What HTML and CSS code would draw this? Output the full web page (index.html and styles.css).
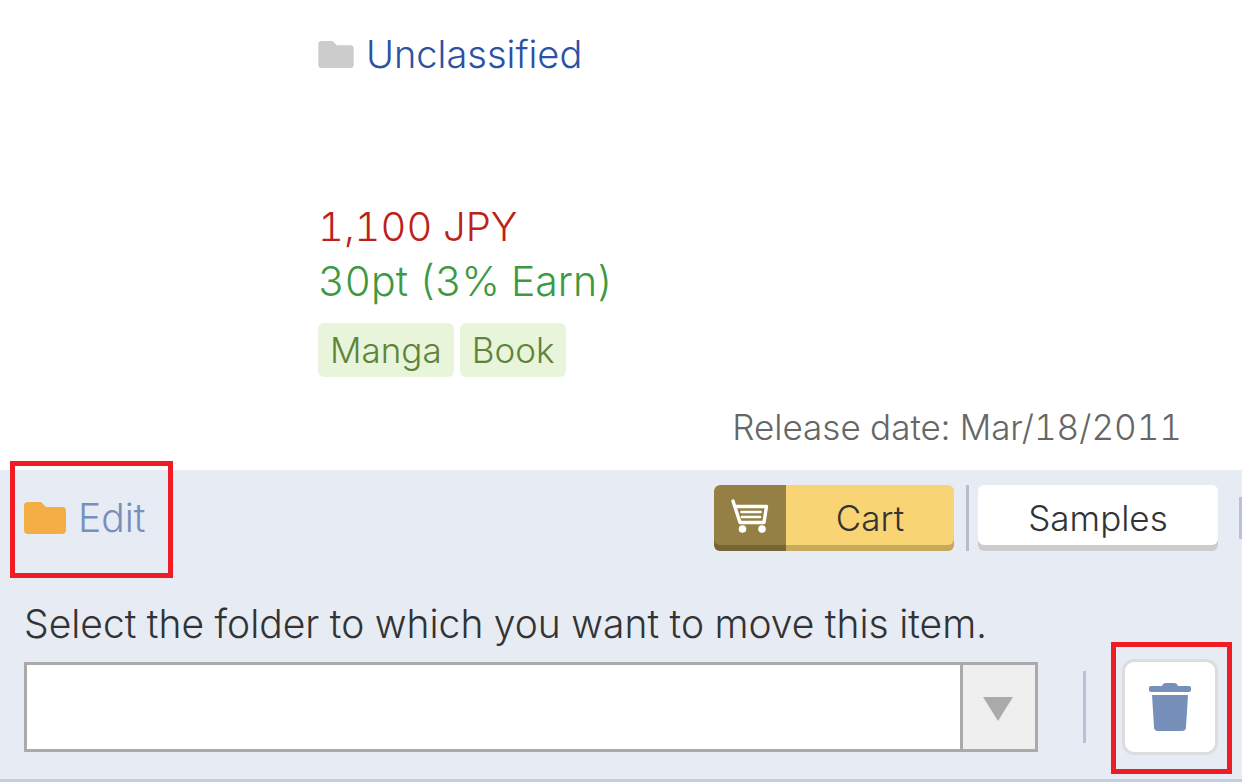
FILE: index.html
```html
<!DOCTYPE html>
<html lang="en">
<head>
<meta charset="utf-8">
<meta name="viewport" content="width=device-width, initial-scale=1">
<title>Wish list item</title>
<link rel="stylesheet" href="styles.css">
</head>
<body>
<main class="page">
  <section class="item">
    <a class="folder-link" href="#">
      <svg class="folder-icon" viewBox="0 0 42 32" aria-hidden="true"><path d="M4 0h13l5 5h16a4 4 0 0 1 4 4v19a4 4 0 0 1-4 4H4a4 4 0 0 1-4-4V4a4 4 0 0 1 4-4z"/></svg>
      <span>Unclassified</span>
    </a>
    <p class="price">1,100 JPY</p>
    <p class="points">30pt (3% Earn)</p>
    <div class="tags"><span class="tag">Manga</span><span class="tag">Book</span></div>
    <p class="release">Release date: Mar/18/2011</p>
  </section>

  <section class="panel">
    <div class="actions">
      <button class="edit" type="button">
        <svg class="edit-icon" viewBox="0 0 42 32" aria-hidden="true"><path d="M4 0h13l5 5h16a4 4 0 0 1 4 4v19a4 4 0 0 1-4 4H4a4 4 0 0 1-4-4V4a4 4 0 0 1 4-4z"/></svg>
        <span>Edit</span>
      </button>
      <button class="button cart" type="button">
        <span class="cart-side">
          <svg class="cart-icon" viewBox="0 0 38 34" aria-hidden="true">
            <path d="M2 2l7 21.500h24l2.500-16H4" fill="none" stroke="#fff" stroke-width="3.400" stroke-linecap="round" stroke-linejoin="round"/>
            <path d="M10.500 13h19M11 18h18" stroke="#fff" stroke-width="2.600" stroke-linecap="round"/>
            <circle cx="11.500" cy="30" r="3.800" fill="#fff"/><circle cx="31" cy="30" r="3.800" fill="#fff"/>
          </svg>
        </span>
        <span class="cart-label">Cart</span>
      </button>
      <span class="divider"></span>
      <button class="button samples" type="button">Samples</button>
      <span class="edge-divider"></span>
    </div>
    <label class="move-label" for="folder">Select the folder to which you want to move this item.</label>
    <div class="move-row">
      <div class="picker">
        <select id="folder" class="picker-select"><option></option></select>
        <span class="picker-arrow"><svg class="arrow-icon" viewBox="0 0 30 24" aria-hidden="true"><path d="M0 0h30L15 24z"/></svg></span>
      </div>
      <span class="row-divider"></span>
      <button class="trash" type="button" aria-label="Delete">
        <svg class="trash-icon" viewBox="0 0 42 48" aria-hidden="true"><path d="M2 3h11q1-3 4-3h8q3 0 4 3h11q2 0 2 2v2q0 2-2 2H2q-2 0-2-2V5q0-2 2-2zM3 12h36l-2 32q0 4-4 4H9q-4 0-4-4z"/></svg>
      </button>
    </div>
  </section>
</main>
</body>
</html>
```
FILE: styles.css
```css
* { box-sizing: border-box; }
body {
  margin: 0;
  background: #fff;
  color: #333;
  font-family: Inter, "Liberation Sans", sans-serif;
  font-size: 36px;
  font-weight: 300;
  font-variant-numeric: tabular-nums;
}
p { margin: 0; }
button { font: inherit; color: inherit; border: 0; padding: 0; background: none; cursor: pointer; }
svg { display: block; }

.item { padding: 27px 60px 16px 318px; }
.folder-link {
  display: inline-flex;
  align-items: center;
  gap: 12px;
  line-height: 54px;
  font-size: 38px;
  color: #2b52a3;
  text-decoration: none;
}
.folder-icon { width: 36px; height: 27px; fill: #ccc; }
.price, .points { line-height: 54px; }
.price { margin-top: 119px; font-size: 40px; color: #bd2219; }
.points { font-size: 41px; color: #3e9a42; }
.tags { display: flex; gap: 6px; margin-top: 15px; }
.tag {
  padding: 0 12px;
  border-radius: 6px;
  background: #e8f5da;
  color: #5f8439;
  font-size: 35px;
  line-height: 54px;
}
.release { margin-top: 24px; font-size: 35px; line-height: 53px; color: #666; text-align: right; }

.panel { padding: 15px 0 24px 24px; background: #e6ebf4; border-bottom: 3px solid #c4ccdf; }
.actions { display: flex; align-items: center; }
.edit {
  position: relative;
  display: flex;
  align-items: center;
  gap: 12px;
  margin-right: auto;
  line-height: 66px;
  font-size: 39px;
  color: #7790ba;
}
.edit::after, .trash::after {
  content: "";
  position: absolute;
  border: 5px solid #ee1c25;
  pointer-events: none;
}
.edit::after { inset: -24px -28px -27px -14px; }
.edit-icon { width: 42px; height: 32px; fill: #f4ae46; }
.button {
  width: 240px;
  height: 66px;
  border-radius: 6px;
  overflow: hidden;
  font-size: 35px;
}
.cart { display: flex; background: #f8d474; box-shadow: inset 0 -6px #c5a95c; }
.cart-side {
  display: grid;
  place-items: center;
  width: 72px;
  height: 66px;
  padding-bottom: 4px;
  border-radius: 6px 0 0 6px;
  background: #948045;
  box-shadow: inset 0 -6px #766637;
}
.cart-icon { width: 38px; height: 34px; }
.cart-label { flex: 1; line-height: 66px; }
.samples { background: #fff; box-shadow: inset 0 -6px #ccc; line-height: 66px; }
.divider { width: 3px; height: 66px; margin: 0 9px 0 12px; background: #b9bdc9; }
.edge-divider { width: 3px; height: 42px; margin-left: 21px; background: #b9c1da; }

.move-label { display: block; margin-top: 46px; line-height: 54px; font-size: 39px; }
.move-row { display: flex; align-items: center; margin-top: 8px; padding-right: 24px; }
.picker { flex: 1; display: grid; height: 90px; border: 3px solid #aaa; }
.picker-select {
  grid-area: 1 / 1;
  width: 100%;
  border: 0;
  border-radius: 0;
  padding: 0 84px 0 12px;
  background: #fff;
  font: inherit;
  appearance: none;
}
.picker-arrow {
  grid-area: 1 / 1;
  justify-self: end;
  display: grid;
  place-items: center;
  width: 75px;
  padding: 4px 3px 0 0;
  border-left: 3px solid #aaa;
  background: #efefef;
  pointer-events: none;
}
.arrow-icon { width: 30px; height: 24px; fill: #aaa; }
.row-divider { width: 3px; height: 72px; margin: 0 36px 0 45px; background: #b9c1da; }
.trash {
  position: relative;
  display: grid;
  place-items: center;
  width: 96px;
  height: 96px;
  border: 3px solid #ddd;
  border-radius: 12px;
  background: #fff;
}
.trash::after { inset: -20px -17px -22px -14px; }
.trash-icon { width: 42px; height: 48px; fill: #7790ba; }
```
